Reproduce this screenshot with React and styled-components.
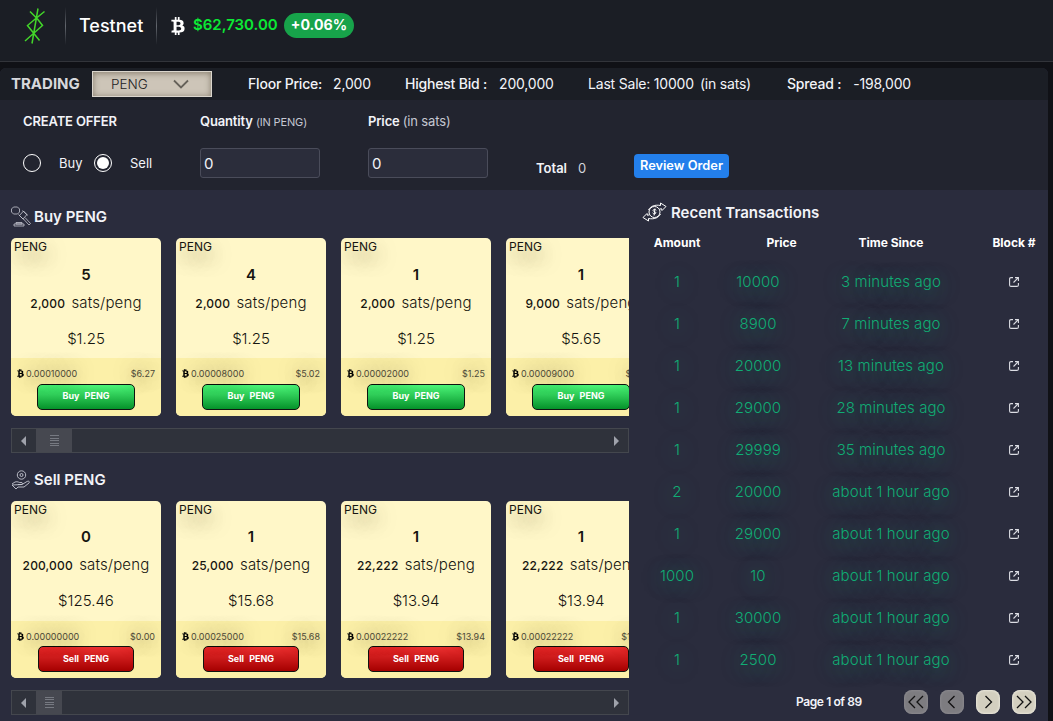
import React from 'react';
import styled, { createGlobalStyle } from 'styled-components';
import { FaBtc } from 'react-icons/fa';

const GlobalStyle = createGlobalStyle`
    * {
        box-sizing: border-box;
    }

    body {
        margin: 0;
        background: #101116;
        overflow: hidden;
        color: #f2f3f8;
        font-family: Inter, "Liberation Sans", sans-serif;
        font-size: 14px;
    }
`;

const Page = styled.div`
    height: 721px;
    overflow: hidden;
`;

/* header */
const Header = styled.header`
    display: flex;
    align-items: center;
    height: 62px;
    padding: 0 0 10px 22px;
    background: #1b1e25;
    border-bottom: 1px solid #32343a;
`;

const Divider = styled.div`
    width: 1px;
    height: 38px;
    background: linear-gradient(#1b1e25, #63676e, #1b1e25);
    margin: 0 ${(props) => props.$right}px 0 ${(props) => props.$left}px;
`;

const Network = styled.div`
    width: 65px;
    white-space: nowrap;
    font-size: 18px;
    font-weight: 500;
    color: #fff;
`;

const BtcPrice = styled.div`
    width: 88px;
    padding: 0 0 2px 6px;
    margin-right: 9px;
    white-space: nowrap;
    font-size: 15px;
    font-weight: 600;
    color: #0be835;
`;

const Badge = styled.div`
    width: 70px;
    height: 25px;
    line-height: 24px;
    border-radius: 13px;
    text-align: center;
    font-size: 14.2px;
    font-weight: 700;
    color: #fff;
    background: #17a34a;
`;

/* trading bar */
const Panel = styled.main`
    width: 1048px;
    margin-top: 6px;
    height: 653px;
    border-radius: 6px 6px 0 0;
    overflow: hidden;
    background: #2a2c3d;
`;

const InfoBar = styled.div`
    display: flex;
    align-items: center;
    height: 32px;
    padding-left: 11px;
    background: #1b1e25;
`;

const Title = styled.div`
    width: 81px;
    padding-bottom: 1px;
    font-size: 15px;
    font-weight: 700;
    color: #d7d8dc;
`;

const Select = styled.div`
    display: flex;
    align-items: center;
    width: 120px;
    height: 26px;
    padding-left: 18px;
    margin-right: 36px;
    background: #cdc5b8;
    border: 1px solid #dbd6cd;
    box-shadow: inset 0 1px 6px rgba(60, 50, 30, 0.5);
    color: #23221f;
    font-size: 13.5px;
    font-weight: 300;

    svg {
        margin-left: 25px;
    }
`;

const Stat = styled.div`
    width: ${(props) => props.$width}px;
    padding-bottom: 1px;
    white-space: pre;
    font-weight: ${(props) => (props.$light ? 400 : 500)};
    letter-spacing: -0.2px;

    span {
        font-weight: 400;
        margin-left: ${(props) => props.$gap}px;
    }
`;

/* create offer form */
const Form = styled.section`
    display: grid;
    grid-template-columns: 177px 168px 168px 98px 1fr;
    grid-template-rows: 42px 42px;
    align-items: center;
    height: 90px;
    padding-left: 23px;
    background: #22242f;
`;

const Label = styled.div`
    font-size: 13px;
    font-weight: 600;
    white-space: nowrap;
    letter-spacing: -0.15px;

    span {
        color: #c5c7d2;
        font-size: ${(props) => props.$small || 13}px;
        font-weight: 400;
    }
`;

const Radios = styled.div`
    display: flex;
    align-items: center;
`;

const Radio = styled.span`
    display: flex;
    align-items: center;
    justify-content: center;
    width: 18px;
    height: 18px;
    border: 1px solid #fff;
    border-radius: 50%;

    &::after {
        content: '';
        width: 12px;
        height: 12px;
        border-radius: 50%;
        background: ${(props) => (props.$checked ? '#fff' : 'transparent')};
    }
`;

const RadioLabel = styled.span`
    width: 35px;
    padding-bottom: 1px;
    margin-left: 18px;
    font-size: 13px;
`;

const Input = styled.div`
    width: 120px;
    height: 30px;
    line-height: 29px;
    padding-left: 3px;
    border: 1px solid #4a4c5a;
    border-radius: 3px;
    background: #2b2d3b;
    font-size: 15px;
`;

const Total = styled.div`
    padding-top: 10px;
    font-size: 13px;
    font-weight: 600;

    span {
        margin-left: 11px;
        font-weight: 400;
        color: #d3d4dc;
    }
`;

const Review = styled.button`
    width: 95px;
    height: 24px;
    margin-top: 5px;
    padding: 0 0 1px;
    border: 0;
    border-radius: 4px;
    background: #237feb;
    color: #fff;
    font: 600 12.8px Inter, sans-serif;
`;

/* market columns */
const Body = styled.div`
    display: flex;
    height: 531px;
`;

const Market = styled.div`
    width: 618px;
    margin: 0 13px 0 11px;
`;

const Heading = styled.h2`
    display: flex;
    align-items: center;
    height: ${(props) => props.$height}px;
    padding-top: ${(props) => props.$top || 0}px;
    margin: 0;
    font-size: 15px;
    font-weight: 600;

    svg {
        margin-right: ${(props) => props.$gap || 3}px;
    }
`;

const Cards = styled.div`
    display: flex;
    gap: 15px;
    overflow: hidden;
`;

const Card = styled.div`
    flex: 0 0 150px;
    height: ${(props) => props.$height}px;
    border-radius: 5px;
    overflow: hidden;
    background: #fff7c8;
    color: #161510;
    text-align: center;
`;

const Tick = styled.div`
    height: 18px;
    line-height: 18px;
    padding-left: 3px;
    text-align: left;
    font-size: 12px;
    text-shadow: 2px 8px 18px rgba(60, 50, 0, 0.6);
`;

const Count = styled.div`
    height: ${(props) => props.$height}px;
    line-height: 38px;
    margin-top: ${(props) => (props.$height === 37 ? -1 : 0)}px;
    padding-bottom: 1px;
    font-size: 15px;
    font-weight: 600;
`;

const Rate = styled.div`
    height: 18px;
    line-height: 18px;
    margin-top: ${(props) => props.$top}px;
    white-space: nowrap;
    font-size: 15px;
    font-weight: 300;
    letter-spacing: 0.15px;

    b {
        margin-right: 2px;
        font-size: 12px;
        font-weight: 500;
    }
`;

const Usd = styled.div`
    height: ${(props) => props.$height}px;
    line-height: 53px;
    font-size: 15px;
    font-weight: 300;
`;

const CardFoot = styled.div`
    height: 60px;
    padding-top: 8px;
    background: #fcf0a8;
`;

const Totals = styled.div`
    display: flex;
    align-items: center;
    height: 14px;
    padding: 0 6px 0 5px;
    font-size: 9px;
    color: #4c4937;
    text-shadow: 0 -1px 18px rgba(70, 60, 0, 0.5), 0 8px 18px rgba(70, 60, 0, 0.3);

    svg {
        color: #000;
        margin-right: 1px;
    }

    span:last-child {
        margin-left: auto;
    }
`;

const Trade = styled.button`
    display: block;
    width: ${(props) => (props.$sell ? 96 : 98)}px;
    height: 26px;
    margin: ${(props) => (props.$sell ? 3 : 4)}px auto 0;
    padding: 0 0 ${(props) => (props.$sell ? 2 : 3)}px;
    border: 1px solid #101510;
    border-radius: 5px;
    background: ${(props) => (props.$sell ? 'linear-gradient(#ec3030, #a50000)' : 'linear-gradient(#4cf578, #05922a)')};
    color: #fff;
    font: 700 9px Inter, sans-serif;
    word-spacing: 3px;
`;

const Scroll = styled.div`
    display: flex;
    align-items: center;
    height: 25px;
    margin-top: 12px;
    border: 1px solid #44474e;
    background: #2f323b;
    color: #a7a9b0;
`;

const Arrow = styled.div`
    width: 0;
    border: 5px solid transparent;
    border-left: ${(props) => (props.$next ? '5px solid #9fa2ab' : '0')};
    border-right: ${(props) => (props.$next ? '0' : '5px solid #9fa2ab')};
    margin: ${(props) => (props.$next ? '0 9px 0 auto' : '0 10px 0 9px')};
`;

const Thumb = styled.div`
    display: flex;
    align-items: center;
    justify-content: center;
    width: ${(props) => props.$width}px;
    height: 23px;
    background: #464850;
`;

const Grip = styled.div`
    width: 9px;
    height: 11px;
    background: repeating-linear-gradient(#777a82 0 1px, transparent 1px 2.5px);
`;

/* recent transactions */
const Recent = styled.div`
    width: 406px;
    padding-top: 6px;
`;

const Row = styled.div`
    display: grid;
    grid-template-columns: 70px 92px 174px 72px;
    align-items: center;
    justify-items: center;
    height: 42px;
    font-size: 15px;
    font-weight: 350;
    letter-spacing: 0.08px;
    color: #10ad74;
    text-shadow: 0 3px 20px rgba(18, 168, 115, 0.75);

    span {
        padding-bottom: 2px;
    }
`;

const HeadRow = styled(Row)`
    height: 28px;
    margin-bottom: 5px;
    font-size: 12px;
    font-weight: 700;
    letter-spacing: 0;
    color: #fff;
    text-shadow: none;

    span {
        padding-bottom: 0;
    }

    span:nth-child(2) {
        padding-left: 47px;
    }
`;

const Pager = styled.div`
    display: flex;
    align-items: center;
    height: 41px;
    padding-left: 154px;
    font-size: 12px;
    font-weight: 600;
    letter-spacing: -0.4px;

    span {
        width: 96px;
    }
`;

const PageButton = styled.button`
    display: flex;
    align-items: center;
    justify-content: center;
    width: 24px;
    height: 24px;
    margin: 0 0 0 12px;
    padding: 0;
    border: 0;
    border-radius: 8px;
    background: ${(props) => (props.disabled ? '#7d7c80' : '#d3cfbf')};
    box-shadow: inset 0 0 3px ${(props) => (props.disabled ? '#96959a' : '#fbfaf2')};
    color: #111;
`;

const buyOffers = [
    { count: 5, rate: '2,000', usd: '$1.25', btc: '0.00010000', total: '$6.27' },
    { count: 4, rate: '2,000', usd: '$1.25', btc: '0.00008000', total: '$5.02' },
    { count: 1, rate: '2,000', usd: '$1.25', btc: '0.00002000', total: '$1.25' },
    { count: 1, rate: '9,000', usd: '$5.65', btc: '0.00009000', total: '$5.65' },
];

const sellOffers = [
    { count: 0, rate: '200,000', usd: '$125.46', btc: '0.00000000', total: '$0.00' },
    { count: 1, rate: '25,000', usd: '$15.68', btc: '0.00025000', total: '$15.68' },
    { count: 1, rate: '22,222', usd: '$13.94', btc: '0.00022222', total: '$13.94' },
    { count: 1, rate: '22,222', usd: '$13.94', btc: '0.00022222', total: '$13.94' },
];

const transactions = [
    [1, 10000, '3 minutes ago'],
    [1, 8900, '7 minutes ago'],
    [1, 20000, '13 minutes ago'],
    [1, 29000, '28 minutes ago'],
    [1, 29999, '35 minutes ago'],
    [2, 20000, 'about 1 hour ago'],
    [1, 29000, 'about 1 hour ago'],
    [1000, 10, 'about 1 hour ago'],
    [1, 30000, 'about 1 hour ago'],
    [1, 2500, 'about 1 hour ago'],
];

const Logo = () => (
    <svg width="26" height="38" viewBox="0 0 26 38" fill="none" stroke="#43d62a" strokeWidth="1.5">
        <path d="M16 1.500 10 36.500M8 4.500 15.500 12 20.500 18.500 3 34M22.500 4.500 12 13 5.500 18.500 11.500 26 17.500 33.500" />
    </svg>
);

const GavelIcon = () => (
    <svg width="20" height="21" viewBox="0 0 20 21" fill="none" stroke="#c6c8d2" strokeWidth="0.8">
        <path d="M2.500 1h4l2 2v3l-2 2h-4l-2-2v-3zM8.500 9.500l4-4.500 3.500 3.500-4 4.500zM11.500 4.500l5 5M7.500 8.500l5 5M14 11.500l5.500 6-1.500 1.500-5.500-6M5 16.500h6v1.500H5zM3 18h10v2H3z" />
    </svg>
);

const HandIcon = () => (
    <svg width="20" height="20" viewBox="0 0 20 20" fill="none" stroke="#c6c8d2" strokeWidth="0.9">
        <circle cx="10.500" cy="5" r="4.200" />
        <circle cx="10.500" cy="5" r="1.500" />
        <path d="M1 14l3-2c3-1 4 1 6 .5 2-.3 2 2 0 2H7M11 14.500l5-3c2-1 3 .5 2 1.500l-5 4H7l-2 2-4-4z" />
    </svg>
);

const ExchangeIcon = () => (
    <svg width="25" height="20" viewBox="0 0 25 20" fill="none" stroke="#fff" strokeWidth="1">
        <circle cx="12.500" cy="10" r="5.500" />
        <path d="M14.300 8.300c-.8-1.200-3.600-.9-3.300.3s2.900.9 2.900 2.200-2.700 1.300-3.300.1M12.900 6.500l-.8 7M6.500 8c2-4 6.500-5.500 12-4.500V1l5.500 3.500-4 4-.5-1.800-2 .5M18.500 12c-2 4-6.500 5.500-12 4.500V19L1 15.500l4-4 .5 1.800 2-.5" />
    </svg>
);

const LinkIcon = () => (
    <svg width="10" height="10" viewBox="0 0 10 10" fill="none" stroke="#dcdde4" strokeWidth="1.100">
        <path d="M4 .600H2Q.600.600.600 2V8Q.600 9.400 2 9.400h5.800Q9.400 9.400 9.400 8V6M6 .600h3.400v3.400M9.300.700 4.500 5.500" />
    </svg>
);

const Chevron = ({ next, double }) => (
    <svg width="20" height="16" viewBox="0 0 20 16" fill="none" stroke="currentColor" strokeWidth="1.300">
        {next ? (
            <path d={double ? 'M3 2l6 6-6 6M11 2l6 6-6 6' : 'M7.500 2l6 6-6 6'} />
        ) : (
            <path d={double ? 'M9 2L3 8l6 6M17 2l-6 6 6 6' : 'M12.500 2l-6 6 6 6'} />
        )}
    </svg>
);

const OfferList = ({ offers, sell }) => (
    <Cards>
        {offers.map((offer, i) => (
            <Card key={i} $height={sell ? 177 : 178}>
                <Tick>PENG</Tick>
                <Count $height={sell ? 37 : 38}>{offer.count}</Count>
                <Rate $top={sell ? 1 : 0}><b>{offer.rate}</b> sats/peng</Rate>
                <Usd $height={sell ? 47 : 46}>{offer.usd}</Usd>
                <CardFoot>
                    <Totals>
                        <FaBtc size={9} />
                        <span>{offer.btc}</span>
                        <span>{offer.total}</span>
                    </Totals>
                    <Trade $sell={sell}>{sell ? 'Sell' : 'Buy'} PENG</Trade>
                </CardFoot>
            </Card>
        ))}
    </Cards>
);

const ScrollBar = ({ thumb }) => (
    <Scroll>
        <Arrow />
        <Thumb $width={thumb}><Grip /></Thumb>
        <Arrow $next />
    </Scroll>
);

export default function App() {
    return (
        <Page>
            <GlobalStyle />
            <Header>
                <Logo />
                <Divider $left={17} $right={13} />
                <Network>Testnet</Network>
                <Divider $left={12} $right={12} />
                <FaBtc size={18} color="#fff" />
                <BtcPrice>$62,730.00</BtcPrice>
                <Badge>+0.06%</Badge>
            </Header>
            <Panel>
                <InfoBar>
                    <Title>TRADING</Title>
                    <Select>
                        PENG
                        <svg width="16" height="10" viewBox="0 0 16 10" fill="none" stroke="#66625a" strokeWidth="1.800">
                            <path d="M1 1.500l7 7 7-7" />
                        </svg>
                    </Select>
                    <Stat $width={157} $gap={11}>Floor Price:<span>2,000</span></Stat>
                    <Stat $width={183} $gap={12}>Highest Bid :<span>200,000</span></Stat>
                    <Stat $width={199} $gap={6} $light>Last Sale: 10000<span>(in sats)</span></Stat>
                    <Stat $width={140} $gap={12}>Spread :<span>-198,000</span></Stat>
                </InfoBar>
                <Form>
                    <Label>CREATE OFFER</Label>
                    <Label $small={11}>Quantity <span>(IN PENG)</span></Label>
                    <Label>Price <span>(in sats)</span></Label>
                    <div />
                    <div />
                    <Radios>
                        <Radio />
                        <RadioLabel>Buy</RadioLabel>
                        <Radio $checked />
                        <RadioLabel>Sell</RadioLabel>
                    </Radios>
                    <Input>0</Input>
                    <Input>0</Input>
                    <Total>Total<span>0</span></Total>
                    <Review>Review Order</Review>
                </Form>
                <Body>
                    <Market>
                        <Heading $height={48} $top={5}>
                            <GavelIcon />
                            Buy PENG
                        </Heading>
                        <OfferList offers={buyOffers} />
                        <ScrollBar thumb={36} />
                        <Heading $height={48} $top={5}>
                            <HandIcon />
                            Sell PENG
                        </Heading>
                        <OfferList offers={sellOffers} sell />
                        <ScrollBar thumb={26} />
                    </Market>
                    <Recent>
                        <Heading $height={32} $gap={4}>
                            <ExchangeIcon />
                            Recent Transactions
                        </Heading>
                        <HeadRow>
                            <span>Amount</span>
                            <span>Price</span>
                            <span>Time Since</span>
                            <span>Block #</span>
                        </HeadRow>
                        {transactions.map(([amount, price, time], i) => (
                            <Row key={i}>
                                <span>{amount}</span>
                                <span>{price}</span>
                                <span>{time}</span>
                                <LinkIcon />
                            </Row>
                        ))}
                        <Pager>
                            <span>Page 1 of 89</span>
                            <PageButton disabled><Chevron double /></PageButton>
                            <PageButton disabled><Chevron /></PageButton>
                            <PageButton><Chevron next /></PageButton>
                            <PageButton><Chevron next double /></PageButton>
                        </Pager>
                    </Recent>
                </Body>
            </Panel>
        </Page>
    );
}
